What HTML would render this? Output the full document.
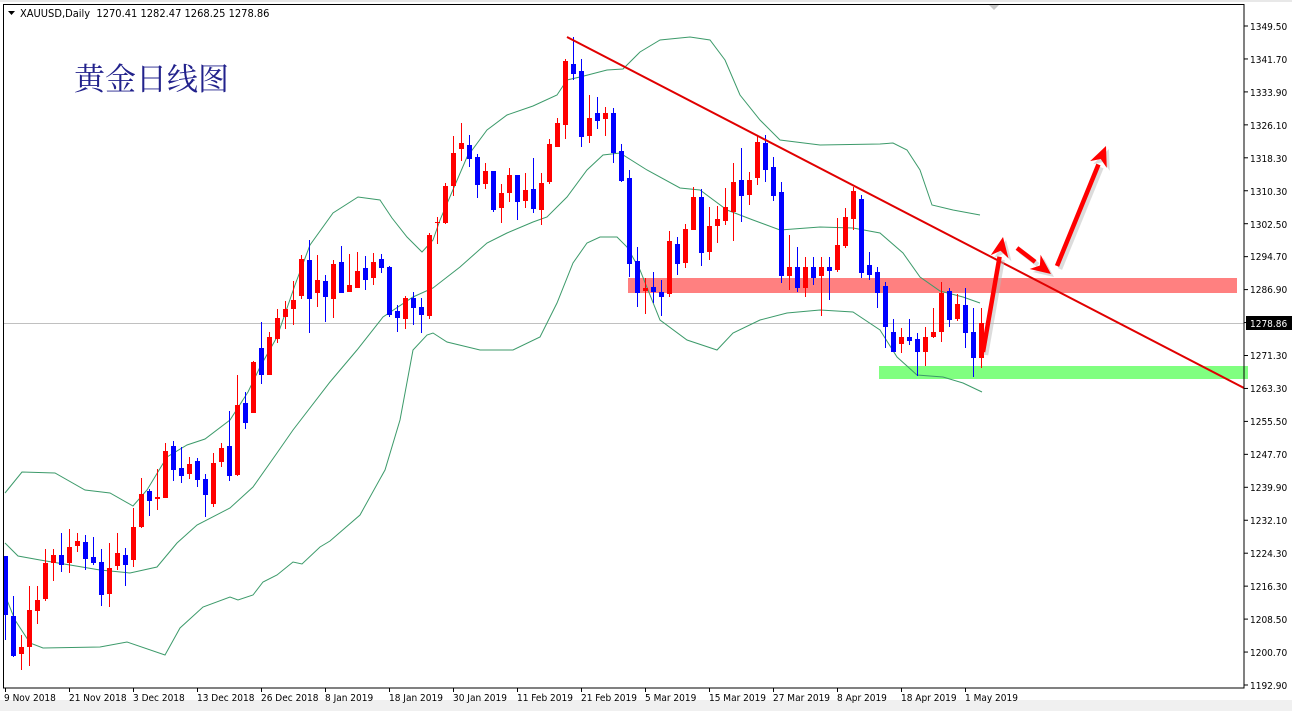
<!DOCTYPE html>
<html><head><meta charset="utf-8"><style>
html,body{margin:0;padding:0;background:#fff;}
body{width:1292px;height:711px;overflow:hidden;position:relative;font-family:Tahoma,"DejaVu Sans","Liberation Sans",sans-serif;}
svg{position:absolute;left:0;top:0;}
.pl{font-size:10px;fill:#000;font-family:"DejaVu Sans Condensed","DejaVu Sans","Liberation Sans",sans-serif;}
</style></head><body>
<svg id="s" width="1292" height="711" viewBox="0 0 1292 711" xmlns="http://www.w3.org/2000/svg">
<rect x="0" y="0" width="1292" height="711" fill="#fff"/>
<rect x="0" y="0" width="1292" height="2" fill="#e8e8e8"/>
<rect x="0" y="700" width="1292" height="11" fill="#f0f0f0"/>
<polygon points="988,4 1000,4 994,10" fill="#c8c8c8"/>
<rect x="628" y="278" width="609" height="15" fill="#ff8080"/>
<rect x="879" y="366" width="369" height="13" fill="#80ff80"/>
<line x1="4" y1="323.5" x2="1244" y2="323.5" stroke="#c0c0c0" stroke-width="1"/>
<g id="bands" fill="none" stroke="#3c9a6a" stroke-width="1"></g>
<g id="candles"></g>
<line x1="567" y1="37" x2="1244" y2="388" stroke="#e00000" stroke-width="2"/>
<g id="arrows"></g>
<rect x="3.5" y="4.5" width="1240.5" height="683.5" fill="none" stroke="#000" stroke-width="1"/>
<text x="20" y="17" font-size="11" fill="#000" font-family="Tahoma,'DejaVu Sans Condensed','DejaVu Sans',sans-serif">XAUUSD,Daily&#160;&#160;1270.41 1282.47 1268.25 1278.86</text>
<polygon points="8,11 15,11 11.5,15" fill="#000"/>
<text x="74" y="90" font-size="31" fill="#22228c" font-family="'Noto Serif CJK SC','Liberation Serif',serif">黄金日线图</text>
<g id="axis"></g>
<rect x="1246" y="316" width="46" height="14" fill="#000"/>
<text x="1250" y="327" class="pl" style="fill:#fff">1278.86</text>
<g class="pl">
<text x="1250" y="30" class="pl">1349.50</text>
<text x="1250" y="63" class="pl">1341.70</text>
<text x="1250" y="96" class="pl">1333.90</text>
<text x="1250" y="129" class="pl">1326.10</text>
<text x="1250" y="162" class="pl">1318.30</text>
<text x="1250" y="195" class="pl">1310.30</text>
<text x="1250" y="228" class="pl">1302.50</text>
<text x="1250" y="260" class="pl">1294.70</text>
<text x="1250" y="293" class="pl">1286.90</text>
<text x="1250" y="359" class="pl">1271.30</text>
<text x="1250" y="392" class="pl">1263.30</text>
<text x="1250" y="425" class="pl">1255.50</text>
<text x="1250" y="458" class="pl">1247.70</text>
<text x="1250" y="491" class="pl">1239.90</text>
<text x="1250" y="524" class="pl">1232.10</text>
<text x="1250" y="557" class="pl">1224.30</text>
<text x="1250" y="590" class="pl">1216.30</text>
<text x="1250" y="623" class="pl">1208.50</text>
<text x="1250" y="656" class="pl">1200.70</text>
<text x="1250" y="689" class="pl">1192.90</text>
</g>
<g class="pl">
<text x="4" y="701" class="pl">9 Nov 2018</text>
<text x="69" y="701" class="pl">21 Nov 2018</text>
<text x="133" y="701" class="pl">3 Dec 2018</text>
<text x="197" y="701" class="pl">13 Dec 2018</text>
<text x="261" y="701" class="pl">26 Dec 2018</text>
<text x="325" y="701" class="pl">8 Jan 2019</text>
<text x="389" y="701" class="pl">18 Jan 2019</text>
<text x="453" y="701" class="pl">30 Jan 2019</text>
<text x="517" y="701" class="pl">11 Feb 2019</text>
<text x="581" y="701" class="pl">21 Feb 2019</text>
<text x="645" y="701" class="pl">5 Mar 2019</text>
<text x="709" y="701" class="pl">15 Mar 2019</text>
<text x="773" y="701" class="pl">27 Mar 2019</text>
<text x="837" y="701" class="pl">8 Apr 2019</text>
<text x="901" y="701" class="pl">18 Apr 2019</text>
<text x="965" y="701" class="pl">1 May 2019</text>
</g>
</svg>
<script>
var NS="http://www.w3.org/2000/svg";
function el(p,t,a){var e=document.createElementNS(NS,t);for(var k in a)e.setAttribute(k,a[k]);p.appendChild(e);return e;}
var C=[[556,615,556,640,'b'],[616,656,596,657,'b'],[647,654,635,670,'r'],[610,647,586,666,'r'],[600,611,586,624,'r'],[563,599,549,601,'r'],[555,563,549,581,'r'],[555,565,533,572,'b'],[547,563,529,573,'r'],[541,546,533,552,'r'],[542,559,535,570,'b'],[557,563,537,565,'b'],[562,595,549,606,'b'],[568,594,543,607,'r'],[553,566,533,570,'r'],[555,565,548,586,'b'],[527,560,508,567,'r'],[494,527,478,528,'r'],[491,501,489,516,'b'],[497,499,469,510,'r'],[451,498,443,498,'r'],[446,470,441,481,'b'],[468,476,447,483,'b'],[464,474,457,479,'r'],[461,480,458,487,'b'],[479,495,474,517,'b'],[463,504,453,507,'r'],[448,462,443,467,'r'],[446,476,411,481,'b'],[405,475,375,476,'r'],[403,423,392,429,'b'],[362,413,361,413,'r'],[348,375,322,384,'b'],[337,375,332,375,'r'],[318,339,309,343,'r'],[309,317,301,329,'r'],[300,309,281,325,'r'],[259,296,255,299,'r'],[260,299,240,333,'b'],[280,293,255,307,'r'],[281,297,275,322,'b'],[264,299,260,318,'r'],[262,293,246,293,'b'],[285,292,254,292,'r'],[271,288,252,288,'r'],[268,280,256,290,'b'],[262,278,253,285,'r'],[259,268,254,273,'b'],[267,315,266,317,'b'],[311,318,305,332,'b'],[298,319,296,329,'r'],[298,308,292,325,'b'],[307,315,298,333,'b'],[235,316,233,319,'r'],[222,223,217,244,'r'],[186,223,183,224,'r'],[153,186,136,196,'r'],[143,149,123,161,'r'],[145,159,135,167,'b'],[157,185,154,198,'b'],[171,184,163,189,'r'],[171,210,171,212,'b'],[193,208,184,223,'r'],[175,193,168,202,'r'],[175,202,175,220,'b'],[190,201,173,208,'r'],[189,209,158,213,'b'],[183,210,173,225,'r'],[144,182,139,184,'r'],[123,147,118,147,'r'],[61,125,59,139,'r'],[64,74,37,80,'b'],[71,137,59,147,'b'],[118,136,95,143,'r'],[113,121,97,129,'b'],[113,119,107,136,'r'],[113,153,108,163,'b'],[151,181,144,182,'b'],[178,264,170,277,'b'],[261,293,247,307,'b'],[288,291,278,314,'r'],[287,292,272,303,'b'],[292,297,280,316,'b'],[241,294,231,297,'r'],[244,264,237,275,'b'],[229,263,224,268,'r'],[197,230,187,230,'r'],[197,253,189,266,'b'],[226,252,207,260,'r'],[219,226,206,243,'r'],[207,221,188,225,'r'],[182,212,163,241,'r'],[180,196,148,222,'b'],[180,195,172,205,'r'],[142,178,136,185,'r'],[143,170,135,182,'b'],[167,196,157,201,'b'],[192,276,182,283,'b'],[267,276,235,290,'r'],[267,288,247,292,'b'],[267,288,257,297,'r'],[267,278,257,285,'b'],[267,276,257,316,'r'],[267,271,257,300,'b'],[245,270,218,272,'r'],[217,246,208,248,'r'],[191,219,187,230,'r'],[199,273,195,278,'b'],[265,275,252,280,'b'],[272,293,267,308,'b'],[286,327,282,348,'b'],[332,352,319,352,'b'],[337,344,328,353,'r'],[337,341,319,345,'b'],[339,352,333,376,'b'],[337,352,327,366,'r'],[332,337,308,338,'r'],[293,332,282,342,'r'],[291,320,288,327,'b'],[304,319,294,321,'r'],[305,333,288,348,'b'],[332,358,308,377,'b'],[323,358,308,368,'r']];
var g=document.getElementById('candles');
C.forEach(function(c,i){var x=5+8*i;var col=c[4]=='r'?'#ff0000':'#0000ff';
el(g,'line',{x1:x+0.5,y1:c[2],x2:x+0.5,y2:c[3],stroke:col,'stroke-width':1});
el(g,'rect',{x:x-2,y:c[0],width:5,height:Math.max(1,c[1]-c[0]),fill:col});});
var B=[
"5,493 22,472 55,473 85,490 110,493 133,506 147,490 167,457 187,445 205,439 230,420 248,392 260,367 277,337 295,285 310,245 333,213 358,197 380,200 392,218 407,237 422,252 433,240 440,220 467,157 487,130 507,115 533,106 557,95 567,80 580,77 607,70 623,69 640,52 660,40 690,37 710,40 725,60 740,95 760,120 780,140 820,145 880,144 893,143 907,150 920,170 932,205 953,210 980,215",
"5,543 18,556 40,560 100,570 130,573 157,567 177,543 197,525 230,508 253,487 277,453 293,430 330,382 357,350 383,317 413,297 433,288 460,267 487,243 507,233 533,222 547,217 567,197 587,170 603,155 620,153 647,170 680,188 700,190 727,210 753,220 780,230 820,227 853,228 880,233 903,253 920,277 940,291 963,297 980,303",
"5,595 15,620 30,643 43,648 100,647 127,642 165,655 180,628 203,607 230,597 238,600 253,595 263,582 277,575 293,562 302,564 320,547 330,541 360,515 385,470 400,420 413,350 427,335 433,333 447,342 480,350 513,350 540,337 557,303 573,263 587,243 600,237 617,237 627,247 640,270 660,320 687,340 717,350 733,333 760,320 787,313 820,310 853,312 880,330 897,357 917,375 943,377 963,383 982,392"];
var bg=document.getElementById('bands');
B.forEach(function(p){el(bg,'polyline',{points:p});});
var ax=document.getElementById('axis');
for(var k=0;k<21;k++){var y=26+k*32.95;el(ax,'line',{x1:1244,y1:y,x2:1248,y2:y,stroke:'#000'});}
for(var k=0;k<16;k++){var x=5.5+64*k;el(ax,'line',{x1:x,y1:688,x2:x,y2:692,stroke:'#000'});}
var ar=document.getElementById('arrows');
function arrow(x1,y1,x2,y2){var dx=x2-x1,dy=y2-y1,L=Math.sqrt(dx*dx+dy*dy),ux=dx/L,uy=dy/L,px=-uy,py=ux,h=20,w=9;
var bx=x2-ux*h,by=y2-uy*h;
[['#bbb',3],['#ff0000',0]].forEach(function(s){var o=s[1];
el(ar,'line',{x1:x1+o,y1:y1+o,x2:bx+o,y2:by+o,stroke:s[0],'stroke-width':4.5,opacity:o?0.5:1});
el(ar,'polygon',{points:(x2+o)+','+(y2+o)+' '+(bx+px*w+o)+','+(by+py*w+o)+' '+(x2-ux*h*0.7+o)+','+(y2-uy*h*0.7+o)+' '+(bx-px*w+o)+','+(by-py*w+o),fill:s[0],opacity:o?0.5:1});});}
arrow(983,352,1003,237);arrow(1017,248,1051,274);arrow(1057,266,1106,146);
</script>
</body></html>
